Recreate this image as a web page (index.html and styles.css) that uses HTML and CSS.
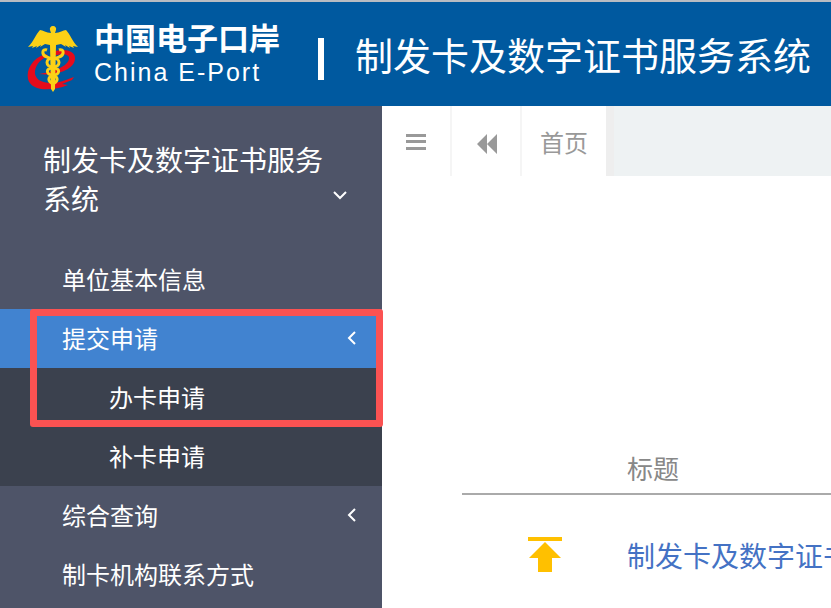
FILE: index.html
```html
<!DOCTYPE html>
<html lang="zh-CN">
<head>
    <meta charset="UTF-8">
    <meta name="viewport" content="width=device-width, initial-scale=1.0">
    <title>制发卡及数字证书服务系统</title>
    <link rel="stylesheet" href="styles.css">
</head>
<body>
    <header class="header">
        <svg class="logo" viewBox="0 0 50 66" aria-hidden="true">
            <path d="M22 27C32 22 48 23 47 33C46 44 28 50 11 48C26 46 40 40 41 33C42 28 34 27 26 30Z" fill="#e60b1c"/>
            <path d="M18 28C4 32-2 44 0 53C3 65 22 66 40 59L34 58L44 54L46 51C38 54 30 57 23 57C12 57 6 52 7 45C8 38 13 33 20 30Z" fill="#e60b1c"/>
            <path d="M25 0a3 3 0 0 1 3 4L27 7C32 7 35 4 38 4C42 8 44 15 50 21L45 20L46 22L41 20L42 22L37 19L38 21L33 18L28 19L27 63L25 66L23 63L22 19L17 18L12 21L13 19L8 22L9 20L4 22L5 20L0 21C6 15 8 8 12 4C15 4 18 7 23 7L22 4A3 3 0 0 1 25 0Z" fill="#fcd116"/>
            <path d="M19 24C14 22 13 29 19 31C23 33 27 33 31 31C37 29 36 22 31 24" fill="none" stroke="#fcd116" stroke-width="3"/>
            <path d="M25 32C17 32 17 41 25 41S33 32 25 32ZM25 42C17 42 18 49 25 49S33 42 25 42ZM25 50C19 50 20 57 25 57S31 50 25 50Z" fill="none" stroke="#fcd116" stroke-width="3"/>
        </svg>
        <div class="brand">
            <strong class="brand-cn">中国电子口岸</strong>
            <span class="brand-en">China E-Port</span>
        </div>
        <span class="divider"></span>
        <h1 class="system-name">制发卡及数字证书服务系统</h1>
    </header>
    <div class="container">
        <nav class="sidebar">
            <a class="menu-title" href="#">
                <span>制发卡及数字证书服务系统</span>
                <svg class="arrow" viewBox="0 0 16 16" aria-hidden="true"><path d="M2 5l6 6 6-6"/></svg>
            </a>
            <ul class="menu">
                <li><a href="#">单位基本信息</a></li>
                <li>
                    <a class="active" href="#">提交申请
                        <svg class="arrow" viewBox="0 0 16 16" aria-hidden="true"><path d="M11 2l-6 6 6 6"/></svg>
                    </a>
                    <ul class="submenu">
                        <li><a href="#">办卡申请</a></li>
                        <li><a href="#">补卡申请</a></li>
                    </ul>
                    <div class="highlight"></div>
                </li>
                <li>
                    <a href="#">综合查询
                        <svg class="arrow" viewBox="0 0 16 16" aria-hidden="true"><path d="M11 2l-6 6 6 6"/></svg>
                    </a>
                </li>
                <li><a href="#">制卡机构联系方式</a></li>
            </ul>
        </nav>
        <main class="content">
            <div class="tabs">
                <button class="tab-btn" type="button" aria-label="菜单">
                    <svg class="icon" viewBox="0 0 22 20" aria-hidden="true"><path d="M1 2h20v3H1zM1 8h20v3H1zM1 15h20v3H1z"/></svg>
                </button>
                <button class="tab-btn" type="button" aria-label="向左">
                    <svg class="icon" viewBox="0 0 22 20" aria-hidden="true"><path d="M12 2v20L2 12zM22 2v20L12 12z"/></svg>
                </button>
                <a class="tab" href="#">首页</a>
            </div>
            <div class="notice-wrap">
                <table class="notice">
                    <thead>
                        <tr><th class="mark-col"></th><th>标题</th></tr>
                    </thead>
                    <tbody>
                        <tr>
                            <td class="mark-col">
                                <svg class="top-icon" viewBox="0 0 34 36" aria-hidden="true"><path d="M0 0h34v4H0zM17 5l16 16h-9v14H10V21H1z"/></svg>
                            </td>
                            <td><a href="#">制发卡及数字证书</a></td>
                        </tr>
                    </tbody>
                </table>
            </div>
        </main>
    </div>
</body>
</html>
```

FILE: styles.css
```css
* {
    box-sizing: border-box;
}

body {
    margin: 0;
    min-height: 100vh;
    display: flex;
    flex-direction: column;
    background-color: #fff;
    font-family: "Noto Sans CJK SC", sans-serif;
}

a {
    color: inherit;
    text-decoration: none;
}

ul {
    list-style: none;
    margin: 0;
    padding: 0;
}

/* Header */
.header {
    display: flex;
    align-items: center;
    height: 106px;
    padding-left: 28px;
    border-top: 2px solid #b8bcc2;
    background-color: #00599f;
    color: #fff;
    white-space: nowrap;
}

.logo {
    width: 50px;
    height: 66px;
    margin-top: 10px;
    flex: none;
    overflow: visible;
}

.brand {
    display: flex;
    flex-direction: column;
    width: 224px;
    margin-left: 16px;
    padding-top: 2px;
    flex: none;
}

.brand-cn {
    font-size: 31px;
    line-height: 34px;
}

.brand-en {
    font-family: "Liberation Sans", Arial, sans-serif;
    font-size: 25px;
    line-height: 36px;
    letter-spacing: 2px;
}

.divider {
    width: 6px;
    height: 42px;
    margin-top: 10px;
    background-color: #fff;
    flex: none;
}

.system-name {
    margin: 0 0 0 31px;
    font-size: 38px;
    font-weight: normal;
    line-height: 48px;
}

/* Sidebar */
.container {
    display: flex;
    flex: 1;
}

.sidebar {
    width: 46%;
    max-width: 382px;
    flex: none;
    background-color: #4e5468;
    color: #fff;
}

.menu-title {
    display: flex;
    align-items: flex-end;
    justify-content: space-between;
    padding: 34px 34px 32px 43px;
    font-size: 28px;
    line-height: 39px;
}

.menu-title span {
    width: 280px;
}

.menu-title .arrow {
    margin-bottom: 15px;
}

.menu > li {
    position: relative;
}

.menu a {
    display: flex;
    align-items: center;
    justify-content: space-between;
    height: 59px;
    padding: 0 22px 2px 62px;
    font-size: 24px;
}

.menu a.active {
    background-color: #4183d0;
}

.submenu {
    background-color: #3b414e;
}

.menu .submenu a {
    padding-left: 109px;
}

.arrow {
    width: 16px;
    height: 16px;
    flex: none;
    fill: none;
    stroke: #fff;
    stroke-width: 2;
}

.highlight {
    position: absolute;
    top: 0;
    left: 30px;
    right: -1px;
    height: 118px;
    border: 7px solid #fb5252;
    border-radius: 3px;
    pointer-events: none;
}

/* Content */
.content {
    flex: 1;
    min-width: 0;
}

.tabs {
    display: flex;
    height: 70px;
    background-color: #eef2f3;
}

.tab-btn {
    display: flex;
    align-items: center;
    justify-content: center;
    width: 70px;
    padding: 2px 0 0;
    border: none;
    border-right: 2px solid #f5f5f5;
    background-color: #fff;
}

.icon {
    width: 22px;
    height: 20px;
    fill: #999;
    overflow: visible;
}

.tab {
    padding: 0 18px;
    border-right: 8px solid #eee;
    background-color: #fff;
    color: #999;
    font-size: 24px;
    line-height: 72px;
}

.notice-wrap {
    padding: 266px 0 0 80px;
    overflow: hidden;
}

.notice {
    width: 100%;
    border-collapse: collapse;
    table-layout: fixed;
    text-align: left;
    white-space: nowrap;
}

.notice th,
.notice td {
    padding: 0;
}

.notice th {
    height: 52px;
    border-bottom: 2px solid #aaa;
    color: #888;
    font-size: 26px;
    font-weight: normal;
}

.notice td {
    height: 120px;
    color: #4472c4;
    font-size: 28px;
}

.notice .mark-col {
    width: 165px;
    text-align: center;
}

.top-icon {
    display: block;
    width: 34px;
    height: 36px;
    margin: 0 auto;
    fill: #ffc000;
}
```
